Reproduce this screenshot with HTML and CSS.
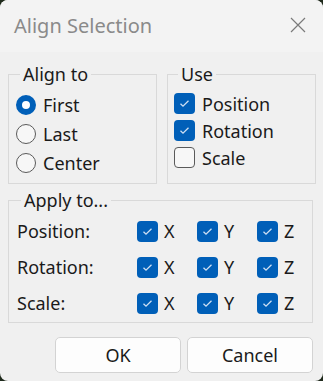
FILE: index.html
```html
<!DOCTYPE html>
<html lang="en">

<head>
    <meta charset="UTF-8">
    <title>Align Selection</title>
    <link rel="stylesheet" href="styles.css">
</head>

<body>
    <div class="window">
        <div class="titlebar">
            <span class="title">Align Selection</span>
            <svg class="close" width="16" height="16" viewBox="0 0 16 16">
                <path d="M1 1 L15 15 M15 1 L1 15" stroke="#7a7a7a" stroke-width="1.2" fill="none"/>
            </svg>
        </div>

        <div class="content">
            <div class="top-row">
                <fieldset class="group align-group">
                    <legend>Align to</legend>
                    <div class="opt-row"><span class="radio checked"></span>First</div>
                    <div class="opt-row"><span class="radio"></span>Last</div>
                    <div class="opt-row"><span class="radio"></span>Center</div>
                </fieldset>
                <fieldset class="group use-group">
                    <legend>Use</legend>
                    <div class="use-row"><span class="check checked"></span>Position</div>
                    <div class="use-row"><span class="check checked"></span>Rotation</div>
                    <div class="use-row"><span class="check"></span>Scale</div>
                </fieldset>
            </div>

            <fieldset class="group apply-group">
                <legend>Apply to...</legend>
                <div class="apply-grid">
                    <span class="apply-label">Position:</span>
                    <span class="axis"><span class="check checked"></span>X</span>
                    <span class="axis"><span class="check checked"></span>Y</span>
                    <span class="axis"><span class="check checked"></span>Z</span>

                    <span class="apply-label">Rotation:</span>
                    <span class="axis"><span class="check checked"></span>X</span>
                    <span class="axis"><span class="check checked"></span>Y</span>
                    <span class="axis"><span class="check checked"></span>Z</span>

                    <span class="apply-label">Scale:</span>
                    <span class="axis"><span class="check checked"></span>X</span>
                    <span class="axis"><span class="check checked"></span>Y</span>
                    <span class="axis"><span class="check checked"></span>Z</span>
                </div>
            </fieldset>

            <div class="buttons">
                <button class="btn">OK</button>
                <button class="btn">Cancel</button>
            </div>
        </div>
    </div>
</body>

</html>
```

FILE: styles.css
```css
body,
html {
    margin: 0;
    padding: 0;
    background: #1f2a1c;
    font-family: "Noto Sans", Arial, sans-serif;
}

.window {
    width: 323px;
    height: 381px;
    background: #f0f0f0;
    border-radius: 8px;
    overflow: hidden;
    display: flex;
    flex-direction: column;
}

.titlebar {
    height: 52px;
    background: #f3f3f3;
    display: flex;
    align-items: center;
    justify-content: space-between;
    padding: 0 17px 0 14px;
    flex-shrink: 0;
}

.title {
    font-size: 20px;
    color: #8a8a8a;
    margin-top: -2px;
}

.close {
    margin-top: -2px;
}

.content {
    padding: 11px 10px 8px 8px;
    display: flex;
    flex-direction: column;
    color: #1a1a1a;
    font-size: 18px;
}

.top-row {
    display: grid;
    grid-template-columns: 149px 149px;
    column-gap: 10px;
}

.group {
    margin: 0;
    border: 1px solid #d9d9d9;
    padding: 0 8px 6px 7px;
    min-width: 0;
}

.group legend {
    margin-left: 4px;
    padding: 0 3px;
    line-height: 22px;
    font-size: 18px;
    color: #1a1a1a;
}

.align-group {
    padding-top: 5px;
}

.opt-row {
    height: 29px;
    display: flex;
    align-items: center;
    gap: 7px;
}

.use-group {
    padding: 5px 6px 6px 6px;
}

.use-row {
    height: 27px;
    display: flex;
    align-items: center;
    gap: 7px;
}

.radio {
    width: 20px;
    height: 20px;
    border: 1px solid #5a5a5a;
    border-radius: 50%;
    background: #f7f7f7;
    box-sizing: border-box;
}

.radio.checked {
    border: 6px solid #005fb8;
    background: #ffffff;
}

.check {
    width: 21px;
    height: 21px;
    box-sizing: border-box;
    border: 1px solid #5a5a5a;
    border-radius: 4px;
    background: #f7f7f7;
    flex-shrink: 0;
}

.check.checked {
    border: none;
    background: #005fb8 url("data:image/svg+xml;utf8,<svg xmlns='http://www.w3.org/2000/svg' width='21' height='21'><path d='M6.5 10.8 L9 13.2 L14.5 7.8' stroke='%23cfe0f3' stroke-width='1.3' fill='none'/></svg>") no-repeat center;
}

.apply-group {
    margin-top: 5px;
    padding: 2px 8px 1px 8px;
}

.apply-grid {
    display: grid;
    grid-template-columns: 120px 60px 60px 60px;
    grid-auto-rows: 36px;
    align-items: center;
}

.axis {
    display: flex;
    align-items: center;
    gap: 6px;
}

.buttons {
    margin-top: 14px;
    display: flex;
    justify-content: flex-end;
    gap: 6px;
}

.btn {
    width: 126px;
    height: 36px;
    background: #fdfdfd;
    border: 1px solid #d3d3d3;
    border-radius: 5px;
    font-family: "Noto Sans", Arial, sans-serif;
    font-size: 18px;
    color: #1a1a1a;
}
```
